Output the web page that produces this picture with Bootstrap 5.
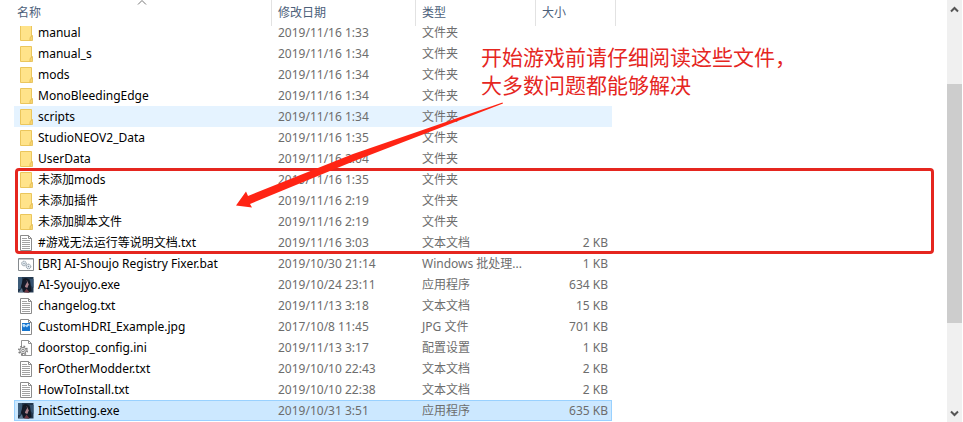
<!DOCTYPE html>
<html lang="zh-CN">
<head>
<meta charset="utf-8">
<meta name="viewport" content="width=device-width, initial-scale=1">
<title>文件列表</title>
<link href="https://cdn.jsdelivr.net/npm/bootstrap@5.3.0/dist/css/bootstrap.min.css" rel="stylesheet">
<style>
  body { font-family: "Noto Sans", "Noto Sans CJK SC", sans-serif; font-size: 12px; line-height: 20px; color: #000; background: #fff; }
  .explorer { min-height: 100vh; }
  .file-pane { padding-left: 14px; min-width: 0; }
  .file-table { table-layout: fixed; width: 598px; border-collapse: separate; border-spacing: 0; }
  .col-name { width: 258px; } .col-date { width: 144px; } .col-type { width: 120px; }
  .file-table th { height: 22px; padding: 0; font-weight: 400; color: #4c607a; }
  .head-cell { height: 26px; margin-bottom: -4px; padding: 3px 0 0 6px; border-right: 1px solid #e2e2e2; background: #fff; position: relative; z-index: 1; }
  .col-name .head-cell { padding-left: 3px; }
  .col-size .head-cell { margin-right: -4px; }
  .sort-mark { position: absolute; left: 123px; top: 0; }
  .file-table td { height: 21px; padding: 0 4px 0 6px; line-height: 19px; color: #6d6d6d; white-space: nowrap; overflow: hidden; border-top: 1px solid transparent; border-bottom: 1px solid transparent; }
  .file-table td:first-child { padding-left: 4px; color: #000; }
  .file-table td:last-child { text-align: right; }
  .file-table a { color: inherit; gap: 4px; height: 19px; }
  .file-table a svg { flex: none; }
  .row-hover td { background: #e5f3ff; }
  .row-picked td { background: #cce8ff; border-color: #99d1ff; }
  .row-picked td:first-child { border-left: 1px solid #99d1ff; padding-left: 3px; }
  .row-picked td:last-child { border-right: 1px solid #99d1ff; padding-right: 3px; }
  .frame-note { position: absolute; left: 15px; right: 13px; top: 168px; height: 86px; border: 3px solid #e5261f; border-radius: 4px; pointer-events: none; }
  .text-note { position: absolute; left: 481px; top: 42px; font-size: 21px; line-height: 28px; color: #e5261f; font-family: "Noto Sans CJK SC", sans-serif; }
  .arrow-note { position: absolute; left: 230px; top: 100px; pointer-events: none; }
  .scroll-strip { width: 15px; margin-right: 1px; background: #f0f0f0; }
  .scroll-strip button { height: 18px; }
  .gap-above { flex: 66 0 0; } .thumb { flex: 239 0 0; background: #cdcdcd; } .gap-below { flex: 81 0 0; }
</style>
<script src="https://cdn.jsdelivr.net/npm/bootstrap@5.3.0/dist/js/bootstrap.bundle.min.js"></script>
</head>
<body>
<svg class="d-none" aria-hidden="true">
  <symbol id="folder" viewBox="0 0 16 16">
    <path d="M2.500.5h11v10.500l-1.500 4.500h-9.500z" fill="#ffe38a" stroke="#ebc65c"/>
    <path d="M14.500 10.500v5h-2.500v-3z" fill="#f8d56e" stroke="#e3bb52" stroke-width=".8"/>
  </symbol>
  <symbol id="text" viewBox="0 0 16 16">
    <path d="M2.500.5h8l3 3v12h-11z" fill="#fff" stroke="#8b8b8b"/>
    <path d="M10.500.5v3h3" fill="none" stroke="#8b8b8b"/>
    <path d="M4 3.500h5M4 5.500h8M4 7.500h8M4 9.500h8M4 11.500h8M4 13.500h8" stroke="#a2a2a2"/>
  </symbol>
  <symbol id="bat" viewBox="0 0 16 16">
    <path d="M.5 2.500h15v12H.5z" fill="#fff" stroke="#858a8e"/>
    <path d="M1 3.500h14" stroke="#c4c8cb"/>
    <circle cx="6" cy="7.500" r="2.300" fill="#e4ebf1" stroke="#7b8894" stroke-dasharray="1.200 .6"/>
    <circle cx="10.500" cy="10.500" r="2.300" fill="#e4ebf1" stroke="#7b8894" stroke-dasharray="1.200 .6"/>
    <circle cx="6" cy="7.500" r=".7" fill="#8492a0"/><circle cx="10.500" cy="10.500" r=".7" fill="#8492a0"/>
  </symbol>
  <symbol id="game" viewBox="0 0 16 16">
    <path d="M0 0h15.500v15.500H0z" fill="#23384f"/>
    <path d="M0 0h4v7l-2 5H0z" fill="#3c5b78"/><path d="M12 2h3.500v9l-3-3z" fill="#355270"/>
    <path d="M5 2q4-3 7 2l1.500 10-3 1.500-6-1-1.500-5z" fill="#121925"/>
    <path d="M6 5l3-1.500 1.800 4-1.500 3.500L7 10z" fill="#a8818a"/>
    <path d="M6 3l3.500 1.500L7.500 8 6 12 4.500 8z" fill="#151b2a"/>
    <path d="M6 15.500l2.500-4 3 4z" fill="#733843"/><path d="M1 15l3-4 1 4z" fill="#5d7890"/>
  </symbol>
  <symbol id="image" viewBox="0 0 16 16">
    <path d="M2.500.5h8l3 3v12h-11z" fill="#fff" stroke="#8b8b8b"/><path d="M10.500.5v3h3" fill="none" stroke="#8b8b8b"/>
    <path d="M4 4h8v8H4z" fill="#1675cf"/><path d="M4.500 5h2L8 6.500 9.500 5h2v2.500l-1-1L9 8.500 7.500 7 6 8.500 4.500 7z" fill="#bce0fb"/>
  </symbol>
  <symbol id="config" viewBox="0 0 16 16">
    <path d="M3.500.5h7l3 3v12h-10z" fill="#fff" stroke="#929292"/><path d="M10.500.5v3h3" fill="none" stroke="#929292"/>
    <circle cx="5" cy="10.500" r="4.200" fill="#fff" stroke="#7d7d7d" stroke-width="1.600" stroke-dasharray="1.700 1.600"/>
    <circle cx="5" cy="10.500" r="3.200" fill="#e7e7e7" stroke="#858585"/><circle cx="5" cy="10.500" r="1.300" fill="#fff" stroke="#858585"/>
  </symbol>
</svg>
<div class="explorer d-flex">
  <main class="file-pane flex-grow-1 position-relative">
    <table class="file-table">
      <thead><tr>
        <th class="col-name" scope="col" aria-sort="ascending"><div class="head-cell">名称<svg class="sort-mark" width="10" height="6" aria-hidden="true"><path d="M1 4.500l4-4 4 4" fill="none" stroke="#777"/></svg></div></th>
        <th class="col-date" scope="col"><div class="head-cell">修改日期</div></th>
        <th class="col-type" scope="col"><div class="head-cell">类型</div></th>
        <th class="col-size" scope="col"><div class="head-cell">大小</div></th>
      </tr></thead>
      <tbody>
        <tr><td><a href="#" class="d-flex align-items-center text-decoration-none"><svg width="16" height="16"><use href="#folder"/></svg>manual</a></td><td>2019/11/16 1:33</td><td>文件夹</td><td></td></tr>
        <tr><td><a href="#" class="d-flex align-items-center text-decoration-none"><svg width="16" height="16"><use href="#folder"/></svg>manual_s</a></td><td>2019/11/16 1:34</td><td>文件夹</td><td></td></tr>
        <tr><td><a href="#" class="d-flex align-items-center text-decoration-none"><svg width="16" height="16"><use href="#folder"/></svg>mods</a></td><td>2019/11/16 1:34</td><td>文件夹</td><td></td></tr>
        <tr><td><a href="#" class="d-flex align-items-center text-decoration-none"><svg width="16" height="16"><use href="#folder"/></svg>MonoBleedingEdge</a></td><td>2019/11/16 1:34</td><td>文件夹</td><td></td></tr>
        <tr class="row-hover"><td><a href="#" class="d-flex align-items-center text-decoration-none"><svg width="16" height="16"><use href="#folder"/></svg>scripts</a></td><td>2019/11/16 1:34</td><td>文件夹</td><td></td></tr>
        <tr><td><a href="#" class="d-flex align-items-center text-decoration-none"><svg width="16" height="16"><use href="#folder"/></svg>StudioNEOV2_Data</a></td><td>2019/11/16 1:35</td><td>文件夹</td><td></td></tr>
        <tr><td><a href="#" class="d-flex align-items-center text-decoration-none"><svg width="16" height="16"><use href="#folder"/></svg>UserData</a></td><td>2019/11/16 2:04</td><td>文件夹</td><td></td></tr>
        <tr><td><a href="#" class="d-flex align-items-center text-decoration-none"><svg width="16" height="16"><use href="#folder"/></svg>未添加mods</a></td><td>2019/11/16 1:35</td><td>文件夹</td><td></td></tr>
        <tr><td><a href="#" class="d-flex align-items-center text-decoration-none"><svg width="16" height="16"><use href="#folder"/></svg>未添加插件</a></td><td>2019/11/16 2:19</td><td>文件夹</td><td></td></tr>
        <tr><td><a href="#" class="d-flex align-items-center text-decoration-none"><svg width="16" height="16"><use href="#folder"/></svg>未添加脚本文件</a></td><td>2019/11/16 2:19</td><td>文件夹</td><td></td></tr>
        <tr><td><a href="#" class="d-flex align-items-center text-decoration-none"><svg width="16" height="16"><use href="#text"/></svg>#游戏无法运行等说明文档.txt</a></td><td>2019/11/16 3:03</td><td>文本文档</td><td>2 KB</td></tr>
        <tr><td><a href="#" class="d-flex align-items-center text-decoration-none"><svg width="16" height="16"><use href="#bat"/></svg>[BR] AI-Shoujo Registry Fixer.bat</a></td><td>2019/10/30 21:14</td><td>Windows 批处理...</td><td>1 KB</td></tr>
        <tr><td><a href="#" class="d-flex align-items-center text-decoration-none"><svg width="16" height="16"><use href="#game"/></svg>AI-Syoujyo.exe</a></td><td>2019/10/24 23:11</td><td>应用程序</td><td>634 KB</td></tr>
        <tr><td><a href="#" class="d-flex align-items-center text-decoration-none"><svg width="16" height="16"><use href="#text"/></svg>changelog.txt</a></td><td>2019/11/13 3:18</td><td>文本文档</td><td>15 KB</td></tr>
        <tr><td><a href="#" class="d-flex align-items-center text-decoration-none"><svg width="16" height="16"><use href="#image"/></svg>CustomHDRI_Example.jpg</a></td><td>2017/10/8 11:45</td><td>JPG 文件</td><td>701 KB</td></tr>
        <tr><td><a href="#" class="d-flex align-items-center text-decoration-none"><svg width="16" height="16"><use href="#config"/></svg>doorstop_config.ini</a></td><td>2019/11/13 3:17</td><td>配置设置</td><td>1 KB</td></tr>
        <tr><td><a href="#" class="d-flex align-items-center text-decoration-none"><svg width="16" height="16"><use href="#text"/></svg>ForOtherModder.txt</a></td><td>2019/10/10 22:43</td><td>文本文档</td><td>2 KB</td></tr>
        <tr><td><a href="#" class="d-flex align-items-center text-decoration-none"><svg width="16" height="16"><use href="#text"/></svg>HowToInstall.txt</a></td><td>2019/10/10 22:38</td><td>文本文档</td><td>2 KB</td></tr>
        <tr class="row-picked"><td><a href="#" class="d-flex align-items-center text-decoration-none"><svg width="16" height="16"><use href="#game"/></svg>InitSetting.exe</a></td><td>2019/10/31 3:51</td><td>应用程序</td><td>635 KB</td></tr>
      </tbody>
    </table>
    <div class="frame-note"></div>
    <div class="text-note">开始游戏前请仔细阅读这些文件，<br>大多数问题都能够解决</div>
    <svg class="arrow-note" width="275" height="110" aria-hidden="true"><path d="M6 105.500L16 91.500l2 4.500L123 54l149.500-51.500.5 1L123 61.500 20 104l2 3.500z" fill="#ff2414"/></svg>
  </main>
  <aside class="scroll-strip d-flex flex-column flex-shrink-0">
    <button type="button" class="border-0 p-0 bg-transparent d-flex align-items-center justify-content-center" aria-label="向上滚动"><svg width="9" height="7"><path d="M1 5.500L4.500 2 8 5.500" fill="none" stroke="#555" stroke-width="2"/></svg></button>
    <div class="gap-above"></div><div class="thumb"></div><div class="gap-below"></div>
    <button type="button" class="border-0 p-0 bg-transparent d-flex align-items-center justify-content-center" aria-label="向下滚动"><svg width="9" height="7"><path d="M1 1.500L4.500 5 8 1.500" fill="none" stroke="#555" stroke-width="2"/></svg></button>
  </aside>
</div>
</body>
</html>
